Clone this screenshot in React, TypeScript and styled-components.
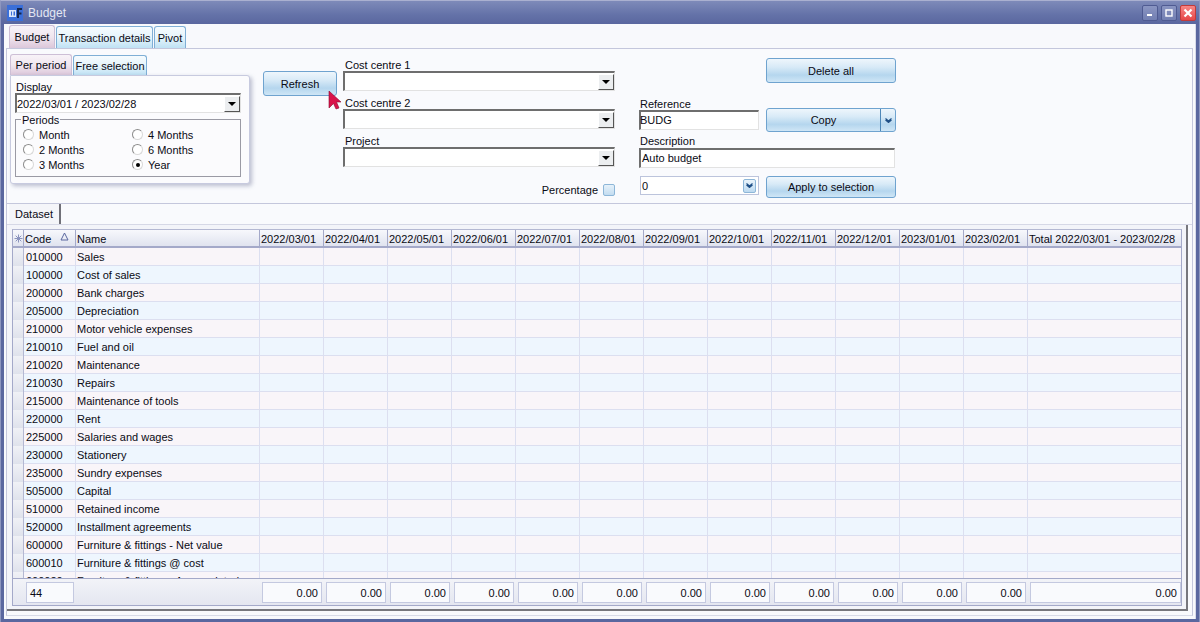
import React from "react";
import styled, { createGlobalStyle } from "styled-components";

const GlobalStyle = createGlobalStyle`
	html, body {
		margin: 0;
		padding: 0;
		width: 1200px;
		height: 622px;
		overflow: hidden;
		background: #5a679f;
	}
	* {
		box-sizing: border-box;
	}
	body {
		font-family: "Liberation Sans", Arial, sans-serif;
		font-size: 11px;
		color: #0a0a14;
	}
`;

const Window = styled.div`
	position: relative;
	width: 1200px;
	height: 622px;
	display: flex;
	flex-direction: column;
	background: #5a679f;
	border-top: 1px solid #aab0d0;
	border-left: 1px solid #8d96bf;
	border-right: 1px solid #8d96bf;
	overflow: hidden;
`;

const TitleBar = styled.div`
	height: 23px;
	flex: none;
	display: flex;
	align-items: center;
	padding: 0 3px 0 6px;
	background: linear-gradient(#7e8ab9, #6472a8 60%, #5a679f);
`;

const TitleText = styled.span`
	flex: 1;
	margin-left: 5px;
	color: #e4e7f3;
	font-size: 12px;
`;

const CaptionButton = styled.div<{ $close?: boolean }>`
	width: 16px;
	height: 16px;
	display: flex;
	align-items: center;
	justify-content: center;
	margin-left: 3px;
	border-radius: 2px;
	border: 1px solid ${(p) => (p.$close ? "#c23a3a" : "#4f5b92")};
	background: ${(p) =>
		p.$close ? "linear-gradient(#f78686, #e64848)" : "linear-gradient(#8a95c2, #727fb2)"};
`;

const Client = styled.div`
	flex: 1;
	min-height: 0;
	margin: 0 3px 3px;
	padding: 1px 2px 2px;
	display: flex;
	flex-direction: column;
	background: #f8f9fc;
	border-right: 1px solid #d8dbe8;
`;

const TabStrip = styled.div<{ $indent: number; $height: number }>`
	flex: none;
	display: flex;
	align-items: flex-end;
	gap: 1px;
	height: ${(p) => p.$height}px;
	padding-left: ${(p) => p.$indent}px;
`;

const Tab = styled.div<{ $active?: boolean; $width: number }>`
	width: ${(p) => p.$width}px;
	height: ${(p) => (p.$active ? "100%" : "calc(100% - 1px)")};
	display: flex;
	align-items: center;
	justify-content: center;
	border: 1px solid ${(p) => (p.$active ? "#cdbfd6" : "#7fafd6")};
	border-bottom: none;
	border-radius: 3px 3px 0 0;
	background: ${(p) =>
		p.$active
			? "linear-gradient(#f8f3f8, #f0e6ef 50%, #dcc7da)"
			: "linear-gradient(#f6fbfe, #e6f4fb 50%, #bfe2f4)"};
	white-space: nowrap;
`;

const MainPane = styled.div`
	flex: 1;
	min-height: 0;
	display: flex;
	flex-direction: column;
	margin-bottom: 1px;
	border: 1px solid #c4c7dc;
	border-bottom-color: #d8dbe8;
	background: #f9fafd;
`;

const TopPanel = styled.div`
	height: 155px;
	flex: none;
	display: flex;
	padding: 5px 0 0 3px;
	border-bottom: 1px solid #c4c7dc;
`;

const DisplayColumn = styled.div`
	width: 240px;
	flex: none;
	display: flex;
	flex-direction: column;
`;

const DisplayCard = styled.div`
	height: 109px;
	padding: 4px 8px 0 4px;
	background: #fbfbfd;
	border: 1px solid #c7cadf;
	border-radius: 0 3px 3px 3px;
	box-shadow: 2px 2px 4px rgba(110, 115, 150, 0.45);
`;

const Label = styled.div`
	height: 13px;
	line-height: 14px;
	padding-left: 1px;
	white-space: nowrap;
`;

const Combo = styled.div`
	height: 20px;
	display: flex;
	align-items: center;
	justify-content: space-between;
	background: #fff;
	border: 2px solid;
	border-color: #6e6e6e #e2e2e2 #e2e2e2 #6e6e6e;
	border-right-width: 1px;
	border-bottom-width: 1px;
`;

const ComboArrow = styled.div`
	width: 16px;
	height: 16px;
	display: flex;
	align-items: center;
	justify-content: center;
	background: #eceef0;
	border: 1px solid;
	border-color: #fff #555 #555 #fff;
	&::after {
		content: "";
		border-left: 4px solid transparent;
		border-right: 4px solid transparent;
		border-top: 4px solid #000;
	}
`;

const PeriodsBox = styled.div`
	position: relative;
	height: 58px;
	margin-top: 6px;
	padding: 7px 0 0 7px;
	border: 1px solid #9a9aa4;
	display: grid;
	grid-template-columns: 109px 1fr;
	grid-auto-rows: 15px;
	align-items: center;
`;

const PeriodsLegend = styled.span`
	position: absolute;
	top: -6px;
	left: 5px;
	padding: 0 1px;
	line-height: 13px;
	background: #fbfbfd;
`;

const RadioRow = styled.div`
	display: flex;
	align-items: center;
	gap: 5px;
`;

const RadioDot = styled.div<{ $on?: boolean }>`
	width: 11px;
	height: 11px;
	border-radius: 50%;
	display: flex;
	align-items: center;
	justify-content: center;
	border: 1px solid #8c8c8c;
	border-right-color: #d8d8d8;
	border-bottom-color: #d8d8d8;
	background: #fff;
	&::after {
		content: "";
		display: ${(p) => (p.$on ? "block" : "none")};
		width: 4px;
		height: 4px;
		border-radius: 50%;
		background: #000;
	}
`;

const RefreshColumn = styled.div`
	width: 74px;
	margin-left: 13px;
	padding-top: 17px;
	flex: none;
`;

const GlassButton = styled.div<{ $height: number }>`
	height: ${(p) => p.$height}px;
	display: flex;
	align-items: center;
	justify-content: center;
	border: 1px solid #6fa3cf;
	border-radius: 3px;
	background: linear-gradient(#eef6fc, #d8eaf7 35%, #b5d6ee 70%, #cfe6f6);
`;

const FieldsColumn = styled.div`
	width: 272px;
	margin-left: 6px;
	flex: none;
	display: flex;
	flex-direction: column;
`;

const FieldLabel = styled(Label)<{ $top: number }>`
	margin-top: ${(p) => p.$top}px;
	padding-left: 2px;
`;

const PercentRow = styled.div`
	margin-top: 17px;
	display: flex;
	justify-content: flex-end;
	align-items: center;
	gap: 5px;
`;

const CheckBox = styled.div`
	width: 12px;
	height: 12px;
	border: 1px solid #8db6d8;
	border-radius: 2px;
	background: linear-gradient(#e6f1fa, #c3dcf0);
`;

const ActionGrid = styled.div`
	width: 257px;
	margin-left: 24px;
	flex: none;
	display: grid;
	grid-template-columns: 120px 130px;
	column-gap: 7px;
	grid-template-rows: 25px 15px 12px 20px 18px 20px 8px 22px;
	align-content: start;
	padding-top: 4px;
`;

const DeleteButton = styled(GlassButton)`
	grid-column: 2;
	grid-row: 1;
`;

const ReferenceLabel = styled(Label)`
	grid-column: 1;
	grid-row: 3;
	align-self: end;
`;

const DescriptionLabel = styled(Label)`
	grid-column: 1;
	grid-row: 5;
	align-self: end;
	line-height: 13px;
`;

const Split = styled.div`
	grid-column: 2;
	grid-row: 3 / 6;
	height: 24px;
	margin-top: 10px;
	display: flex;
	border: 1px solid #6fa3cf;
	border-radius: 3px;
	background: linear-gradient(#eef6fc, #d8eaf7 35%, #b5d6ee 70%, #cfe6f6);
`;

const SplitMain = styled.div`
	flex: 1;
	display: flex;
	align-items: center;
	justify-content: center;
	border-right: 1px solid #4f88b8;
`;

const SplitArrow = styled.div`
	width: 14px;
	display: flex;
	align-items: center;
	justify-content: center;
`;

const TextInput = styled.div`
	grid-column: 1;
	grid-row: 4;
	height: 20px;
	width: 120px;
	line-height: 17px;
	text-indent: -1px;
	background: #fff;
	border: 2px solid;
	border-color: #6e6e6e #e2e2e2 #e2e2e2 #6e6e6e;
	border-right-width: 1px;
	border-bottom-width: 1px;
`;

const WideInput = styled(TextInput)`
	grid-column: 1 / 3;
	grid-row: 6;
	width: 256px;
	text-indent: 1px;
`;

const SpinCombo = styled.div`
	grid-column: 1;
	grid-row: 8;
	height: 19px;
	margin-left: 1px;
	display: flex;
	align-items: center;
	justify-content: space-between;
	padding: 0 2px 0 1px;
	background: #fff;
	border: 1px solid #bcc4dc;
`;

const SpinButton = styled.div`
	width: 13px;
	height: 14px;
	display: flex;
	align-items: center;
	justify-content: center;
	border: 1px solid #8db6d8;
	border-radius: 2px;
	background: linear-gradient(#eaf4fb, #bcd9f0);
`;

const ApplyButton = styled(GlassButton)`
	grid-column: 2;
	grid-row: 8;
`;

const DatasetStrip = styled.div`
	height: 21px;
	flex: none;
	padding-left: 2px;
	border-bottom: 1px solid #d6d8e6;
`;

const DatasetTab = styled.div`
	width: 52px;
	height: 20px;
	display: flex;
	align-items: center;
	justify-content: center;
	border-right: 2px solid #707078;
	background: #f4f5f9;
`;

const DatasetFrame = styled.div`
	flex: 1;
	min-height: 0;
	margin: 0 4px 4px 0;
	padding: 4px 4px 4px 5px;
	background: #f3f4f9;
	border-right: 2px solid #77777d;
	border-bottom: 2px solid #77777d;
`;

const Grid = styled.div`
	height: 377px;
	display: flex;
	flex-direction: column;
	border: 1px solid #a4a9c9;
	border-top-color: #b4b8d2;
`;

const GridBody = styled.div`
	flex: 1;
	min-height: 0;
	overflow: hidden;
`;

const COLUMNS = "11px 52px 184px repeat(12, 64px) 155px";

const HeaderRow = styled.div`
	height: 18px;
	display: grid;
	grid-template-columns: ${COLUMNS};
	background: linear-gradient(#f7f8fc, #e0e3ef);
	border-bottom: 2px solid #a4a9c9;
`;

const HeaderCell = styled.div`
	position: relative;
	padding-left: 1px;
	line-height: 18px;
	white-space: nowrap;
	overflow: hidden;
	border-right: 1px solid #a4a9c9;
	&:last-child {
		border-right: none;
	}
`;

const SortMark = styled.svg`
	position: absolute;
	top: 2px;
	right: 6px;
`;

const StarCell = styled(HeaderCell)`
	padding: 0;
	display: flex;
	align-items: center;
	justify-content: center;
`;

const DataRow = styled.div<{ $odd: boolean }>`
	height: 18px;
	display: grid;
	grid-template-columns: ${COLUMNS};
	background: ${(p) => (p.$odd ? "#eef6fe" : "#f9f5f9")};
	border-bottom: 1px solid #dcdff0;
`;

const Cell = styled.div`
	line-height: 19px;
	padding-left: 2px;
	white-space: nowrap;
	border-right: 1px solid #dcdff0;
	&:last-child {
		border-right: none;
	}
`;

const NameCell = styled(Cell)`
	padding-left: 1px;
`;

const RowHandle = styled.div`
	background: linear-gradient(#f0f1f6, #dfe2ec);
	border-right: 1px solid #b4b8d2;
	border-bottom: 1px solid #c4c7dc;
`;

const Footer = styled.div`
	height: 27px;
	flex: none;
	display: grid;
	grid-template-columns: 48px 180px repeat(12, 60px) 151px;
	column-gap: 4px;
	padding: 3px 0 0 13px;
	background: linear-gradient(#f2f3f8, #e4e6f0);
	border-top: 1px solid #a4a9c9;
`;

const FooterSpacer = styled.div``;

const FooterBox = styled.div<{ $right?: boolean }>`
	height: 21px;
	line-height: 20px;
	padding: 0 3px;
	text-align: ${(p) => (p.$right ? "right" : "left")};
	background: #f9fafd;
	border: 1px solid #c4c9e0;
`;

const Pointer = styled.svg`
	position: absolute;
	left: 327px;
	top: 90px;
`;

const accounts = [
	["010000", "Sales"],
	["100000", "Cost of sales"],
	["200000", "Bank charges"],
	["205000", "Depreciation"],
	["210000", "Motor vehicle expenses"],
	["210010", "Fuel and oil"],
	["210020", "Maintenance"],
	["210030", "Repairs"],
	["215000", "Maintenance of tools"],
	["220000", "Rent"],
	["225000", "Salaries and wages"],
	["230000", "Stationery"],
	["235000", "Sundry expenses"],
	["505000", "Capital"],
	["510000", "Retained income"],
	["520000", "Installment agreements"],
	["600000", "Furniture & fittings - Net value"],
	["600010", "Furniture & fittings @ cost"],
	["600020", "Furniture & fittings - Accumulated"],
];

const months = [
	"2022/03/01", "2022/04/01", "2022/05/01", "2022/06/01", "2022/07/01", "2022/08/01",
	"2022/09/01", "2022/10/01", "2022/11/01", "2022/12/01", "2023/01/01", "2023/02/01",
];

const periods = [
	["Month", false],
	["4 Months", false],
	["2 Months", false],
	["6 Months", false],
	["3 Months", false],
	["Year", true],
] as const;

const Chevron = () => (
	<svg width="7" height="5" viewBox="0 0 7 5">
		<path d="M0.5 0.5 L3.5 3 L6.5 0.5 M0.5 2 L3.5 4.5 L6.5 2" fill="none" stroke="#1f4f86" strokeWidth="1.1" />
	</svg>
);

export default function App() {
	return (
		<>
			<GlobalStyle />
			<Window>
				<TitleBar>
					<svg width="16" height="16" viewBox="0 0 16 16">
						<rect x="0" y="0" width="16" height="16" fill="#3b6fd8" />
						<rect x="2" y="5" width="7" height="7" fill="#dbe6fa" />
						<path d="M4 6.5 H5 V10.5 H4 Z M6.5 6.5 H8 V10.5 H6.5 Z" fill="#3b6fd8" />
						<path d="M10 3 H15 V5 H12 V7.5 H14.5 V9.5 H12 V13 H10 Z" fill="#14264f" />
					</svg>
					<TitleText>Budget</TitleText>
					<CaptionButton>
						<svg width="8" height="8" viewBox="0 0 8 8">
							<rect x="1" y="5" width="5" height="2" fill="#fff" />
						</svg>
					</CaptionButton>
					<CaptionButton>
						<svg width="8" height="8" viewBox="0 0 8 8">
							<rect x="1" y="1" width="6" height="6" fill="none" stroke="#fff" strokeWidth="1.4" />
						</svg>
					</CaptionButton>
					<CaptionButton $close>
						<svg width="10" height="10" viewBox="0 0 10 10">
							<path d="M1.5 1.5 L8.5 8.5 M8.5 1.5 L1.5 8.5" stroke="#fff" strokeWidth="2.2" />
						</svg>
					</CaptionButton>
				</TitleBar>
				<Client>
					<TabStrip $indent={3} $height={23}>
						<Tab $active $width={46}>Budget</Tab>
						<Tab $width={97}>Transaction details</Tab>
						<Tab $width={32}>Pivot</Tab>
					</TabStrip>
					<MainPane>
						<TopPanel>
							<DisplayColumn>
								<TabStrip $indent={0} $height={21}>
									<Tab $active $width={62}>Per period</Tab>
									<Tab $width={74}>Free selection</Tab>
								</TabStrip>
								<DisplayCard>
									<Label>Display</Label>
									<Combo>
										2022/03/01 / 2023/02/28
										<ComboArrow />
									</Combo>
									<PeriodsBox>
										<PeriodsLegend>Periods</PeriodsLegend>
										{periods.map(([name, on]) => (
											<RadioRow key={name}>
												<RadioDot $on={on} />
												{name}
											</RadioRow>
										))}
									</PeriodsBox>
								</DisplayCard>
							</DisplayColumn>
							<RefreshColumn>
								<GlassButton $height={25}>Refresh</GlassButton>
							</RefreshColumn>
							<FieldsColumn>
								<FieldLabel $top={4}>Cost centre 1</FieldLabel>
								<Combo><span /><ComboArrow /></Combo>
								<FieldLabel $top={5}>Cost centre 2</FieldLabel>
								<Combo><span /><ComboArrow /></Combo>
								<FieldLabel $top={5}>Project</FieldLabel>
								<Combo><span /><ComboArrow /></Combo>
								<PercentRow>
									Percentage
									<CheckBox />
								</PercentRow>
							</FieldsColumn>
							<ActionGrid>
								<DeleteButton $height={25}>Delete all</DeleteButton>
								<ReferenceLabel>Reference</ReferenceLabel>
								<Split>
									<SplitMain>Copy</SplitMain>
									<SplitArrow><Chevron /></SplitArrow>
								</Split>
								<TextInput>BUDG</TextInput>
								<DescriptionLabel>Description</DescriptionLabel>
								<WideInput>Auto budget</WideInput>
								<SpinCombo>
									0
									<SpinButton><Chevron /></SpinButton>
								</SpinCombo>
								<ApplyButton $height={22}>Apply to selection</ApplyButton>
							</ActionGrid>
						</TopPanel>
						<DatasetStrip>
							<DatasetTab>Dataset</DatasetTab>
						</DatasetStrip>
						<DatasetFrame>
							<Grid>
								<HeaderRow>
									<StarCell>
										<svg width="9" height="9" viewBox="0 0 9 9">
											<path d="M4.5 0.5 V8.5 M0.5 4.5 H8.5 M1.7 1.7 L7.3 7.3 M7.3 1.7 L1.7 7.3" stroke="#8a93bd" strokeWidth="1" />
										</svg>
									</StarCell>
									<HeaderCell>
										Code
										<SortMark width="9" height="9" viewBox="0 0 9 9">
											<path d="M4.5 1 L8 8 H1 Z" fill="none" stroke="#5a679f" strokeWidth="1" />
										</SortMark>
									</HeaderCell>
									<HeaderCell>Name</HeaderCell>
									{months.map((m) => (
										<HeaderCell key={m}>{m}</HeaderCell>
									))}
									<HeaderCell>Total 2022/03/01 - 2023/02/28</HeaderCell>
								</HeaderRow>
								<GridBody>
									{accounts.map(([code, name], i) => (
										<DataRow key={code} $odd={i % 2 === 1}>
											<RowHandle />
											<Cell>{code}</Cell>
											<NameCell>{name}</NameCell>
											{months.map((m) => (
												<Cell key={m} />
											))}
											<Cell />
										</DataRow>
									))}
								</GridBody>
								<Footer>
									<FooterBox>44</FooterBox>
									<FooterSpacer />
									{months.map((m) => (
										<FooterBox key={m} $right>0.00</FooterBox>
									))}
									<FooterBox $right>0.00</FooterBox>
								</Footer>
							</Grid>
						</DatasetFrame>
					</MainPane>
				</Client>
				<Pointer width="16" height="20" viewBox="0 0 16 20">
					<path d="M1 0 L13 11 L8.5 11 L11 17 L8 18 L5.5 12.5 L1 17 Z" fill="#d9134a" stroke="#8a0a30" strokeWidth="0.6" />
				</Pointer>
			</Window>
		</>
	);
}
